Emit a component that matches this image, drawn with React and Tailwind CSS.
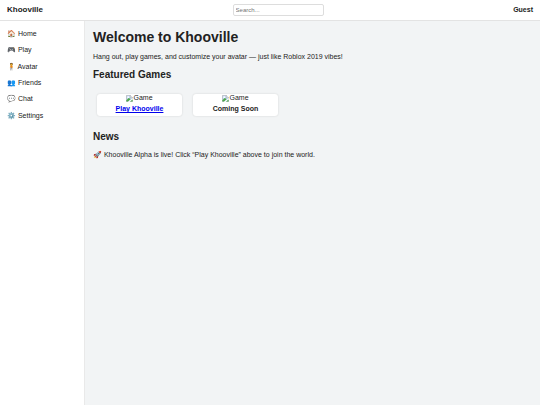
import React, { useState } from "react";

const links = [
  { icon: "🏠", label: "Home" },
  { icon: "🎮", label: "Play" },
  { icon: "🧍", label: "Avatar" },
  { icon: "👥", label: "Friends" },
  { icon: "💬", label: "Chat" },
  { icon: "⚙️", label: "Settings" },
];

const games = [
  { id: 1, title: "Play Khooville", href: "#play" },
  { id: 2, title: "Coming Soon" },
];

function GameThumb() {
  return (
    <div className="flex h-2 items-center justify-center">
      <svg viewBox="0 0 16 16" className="size-[7px]" aria-hidden="true">
        <path d="M1 1h9l5 5v9H1z" fill="#c5d9f7" stroke="#8c8c8c" />
        <path d="M10 1v5h5" fill="#fff" stroke="#8c8c8c" />
        <circle cx="5" cy="5" r="2" fill="#fff" />
        <path d="M1 15v-3l5-5 5 2-6 6z" fill="#4ea84a" />
        <path d="M4 16L16 7v3l-8 6z" fill="#fff" />
        <path d="M9 15l6-5v5z" fill="#4ea84a" />
      </svg>
      <span>Game</span>
    </div>
  );
}

function GameCard({ game }) {
  return (
    <div className="w-[85px] rounded-[3px] bg-white pb-[3px] text-center shadow-[0_0_2px_rgba(0,0,0,0.15)]">
      <GameThumb />
      <h3 className="mt-[3px] font-bold">
        {game.href ? (
          <a href={game.href} className="text-[#0000ee] underline">
            {game.title}
          </a>
        ) : (
          game.title
        )}
      </h3>
    </div>
  );
}

export default function App() {
  const [search, setSearch] = useState("");

  return (
    <div className="flex min-h-screen flex-col bg-[#f2f4f5] font-['Liberation_Sans',Arial,sans-serif] text-[7px] leading-[8px] text-[#222]">
      <header className="flex h-[21px] items-center justify-between border-b border-[#e3e3e3] bg-white px-[7px]">
        <div className="text-[8px] font-bold">Khooville</div>
        <input
          type="text"
          aria-label="Search"
          placeholder="Search..."
          value={search}
          onChange={(e) => setSearch(e.target.value)}
          className="h-3 w-[91px] rounded-[2px] border border-[#ddd] bg-white px-[2px] text-[6px] placeholder:text-[#757575]"
        />
        <div className="font-bold">Guest</div>
      </header>

      <div className="flex flex-1">
        <aside className="w-[85px] shrink-0 border-r border-[#e9e9e9] bg-white px-[7px] pt-[5px]">
          <nav className="grid h-[98px] auto-rows-fr items-center">
            {links.map((link) => (
              <a key={link.label} href={`#${link.label.toLowerCase()}`}>
                {link.icon} {link.label}
              </a>
            ))}
          </nav>
        </aside>

        <main className="flex-1 px-2 pt-2">
          <h1 className="text-[14px] leading-4 font-bold">Welcome to Khooville</h1>
          <p className="mt-2">
            Hang out, play games, and customize your avatar — just like Roblox 2019 vibes!
          </p>

          <h2 className="mt-2 text-[10px] leading-3 font-bold">Featured Games</h2>
          <div className="mt-[13px] ml-1 flex flex-wrap gap-[11px]">
            {games.map((game) => (
              <GameCard key={game.id} game={game} />
            ))}
          </div>

          <h2 className="mt-[15px] text-[10px] leading-3 font-bold">News</h2>
          <p className="mt-2">
            🚀 Khooville Alpha is live! Click “Play Khooville” above to join the world.
          </p>
        </main>
      </div>
    </div>
  );
}
